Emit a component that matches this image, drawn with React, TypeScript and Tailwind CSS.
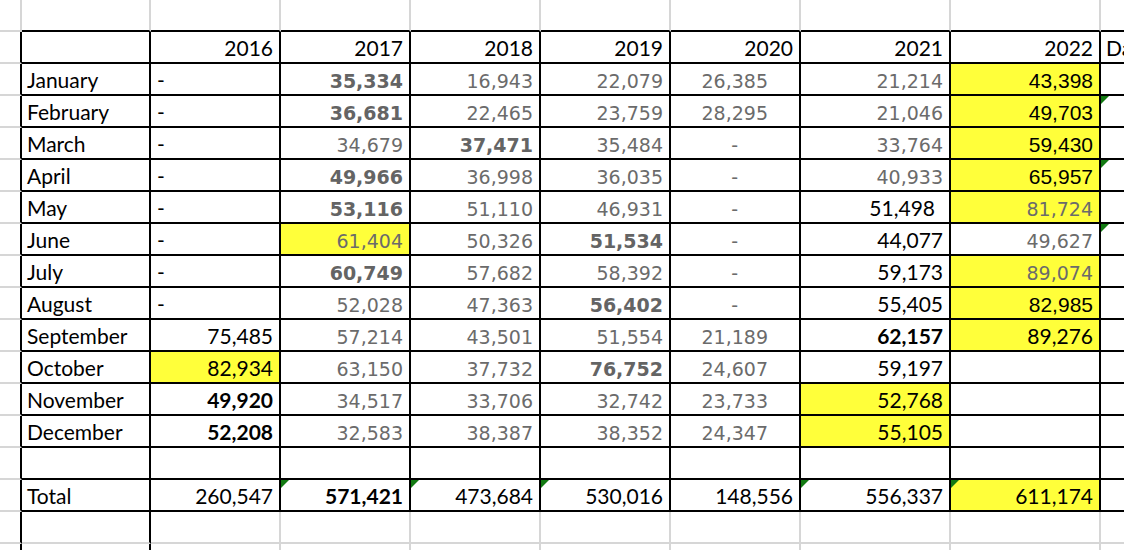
import type { ReactNode } from "react";

type Kind = "g" | "gb" | "k" | "kb" | "a" | "dash" | "gdash";
type Cell = { v?: string; k?: Kind; y?: boolean; t?: boolean; pr?: string };

// font per cell style
const kindCls: Record<Kind, string> = {
  g: "justify-end font-['DejaVu_Sans',sans-serif] text-[19px] text-[#6b6b6b] pb-[3px]",
  gb: "justify-end font-['DejaVu_Sans',sans-serif] font-bold text-[19px] text-[#646464] pb-[3px]",
  k: "justify-end font-['Lato',sans-serif] text-[21px] text-black pb-[4px]",
  kb: "justify-end font-['Lato',sans-serif] font-bold text-[21px] text-black pb-[4px]",
  a: "justify-end font-['Liberation_Sans',Arial,sans-serif] text-[21px] text-black pb-[3px]",
  dash: "justify-start pl-[6px] font-['Lato',sans-serif] text-[21px] text-black pb-[4px]",
  gdash: "justify-end pr-[61px] font-['DejaVu_Sans',sans-serif] text-[19px] text-[#6b6b6b] pb-[3px]",
};

const g = (v: string, o: Partial<Cell> = {}): Cell => ({ v, k: "g", ...o });
const gb = (v: string, o: Partial<Cell> = {}): Cell => ({ v, k: "gb", ...o });
const k = (v: string, o: Partial<Cell> = {}): Cell => ({ v, k: "k", ...o });
const kb = (v: string, o: Partial<Cell> = {}): Cell => ({ v, k: "kb", ...o });
const a = (v: string, o: Partial<Cell> = {}): Cell => ({ v, k: "a", ...o });
const D: Cell = { v: "-", k: "dash" };
const GD: Cell = { v: "-", k: "gdash" };
const gp = (v: string) => g(v, { pr: "pr-[31px]" });
const Y = { y: true };
const T = { t: true };

// label, 2016..2022, triangle in the "Da" column
const body: [string, Cell[], boolean][] = [
  ["January", [D, gb("35,334"), g("16,943"), g("22,079"), gp("26,385"), g("21,214"), a("43,398", Y)], false],
  ["February", [D, gb("36,681"), g("22,465"), g("23,759"), gp("28,295"), g("21,046"), a("49,703", Y)], true],
  ["March", [D, g("34,679"), gb("37,471"), g("35,484"), GD, g("33,764"), a("59,430", Y)], false],
  ["April", [D, gb("49,966"), g("36,998"), g("36,035"), GD, g("40,933"), a("65,957", Y)], true],
  ["May", [D, gb("53,116"), g("51,110"), g("46,931"), GD, k("51,498", { pr: "pr-[14px]" }), g("81,724", Y)], false],
  ["June", [D, g("61,404", Y), g("50,326"), gb("51,534"), GD, k("44,077"), g("49,627")], true],
  ["July", [D, gb("60,749"), g("57,682"), g("58,392"), GD, k("59,173"), g("89,074", Y)], false],
  ["August", [D, g("52,028"), g("47,363"), gb("56,402"), GD, k("55,405"), a("82,985", Y)], false],
  ["September", [k("75,485"), g("57,214"), g("43,501"), g("51,554"), gp("21,189"), kb("62,157"), k("89,276", Y)], false],
  ["October", [k("82,934", Y), g("63,150"), g("37,732"), gb("76,752"), gp("24,607"), k("59,197"), {}], false],
  ["November", [kb("49,920"), g("34,517"), g("33,706"), g("32,742"), gp("23,733"), k("52,768", Y), {}], false],
  ["December", [kb("52,208"), g("32,583"), g("38,387"), g("38,352"), gp("24,347"), k("55,105", Y), {}], false],
];

const years = ["2016", "2017", "2018", "2019", "2020", "2021", "2022"];

function Tri() {
  return (
    <svg className="absolute left-0 top-0" width="8" height="8" viewBox="0 0 8 8">
      <polygon points="0,0 8,0 0,8" fill="#127a12" />
    </svg>
  );
}

function Box({
  r,
  c,
  cell,
  children,
  extra = "",
}: {
  r: number;
  c: number;
  cell?: Cell;
  children?: ReactNode;
  extra?: string;
}) {
  // which grid lines are the table's black ones
  let right = "border-r-[#d6d6d6]";
  if ((c === 0 || c === 1) && r >= 1) right = "border-r-black";
  if (c >= 2 && c <= 8 && r >= 1 && r <= 15) right = "border-r-black";
  const bottom = c >= 1 && r <= 15 ? "border-b-black" : "border-b-[#d6d6d6]";
  const kind = cell?.k ? kindCls[cell.k] : "";
  const pad = cell?.k && cell.k !== "dash" && cell.k !== "gdash" ? cell.pr || "pr-[6px]" : "";
  return (
    <div
      className={`relative flex items-end overflow-hidden whitespace-nowrap leading-none border-r-2 border-b-2 ${right} ${bottom} ${
        cell?.y ? "bg-[#ffff3a]" : ""
      } ${kind} ${pad} ${extra}`}
    >
      {cell?.t && <Tri />}
      {cell?.v}
      {children}
    </div>
  );
}

const label = "justify-start pl-[5px] font-['Lato',sans-serif] text-[21px] text-black pb-[4px]";

export default function App() {
  const rows: ReactNode[] = [];

  // row 0: plain sheet grid above the table
  for (let c = 0; c < 10; c++) rows.push(<Box key={`0-${c}`} r={0} c={c} />);

  // header
  rows.push(<Box key="1-0" r={1} c={0} />);
  rows.push(<Box key="1-1" r={1} c={1} />);
  years.forEach((y, i) => rows.push(<Box key={`1-${i + 2}`} r={1} c={i + 2} cell={k(y)} />));
  rows.push(<Box key="1-9" r={1} c={9} extra={label}>Da</Box>);

  body.forEach(([name, cells, tri], idx) => {
    const r = idx + 2;
    rows.push(<Box key={`${r}-0`} r={r} c={0} />);
    rows.push(<Box key={`${r}-1`} r={r} c={1} extra={label}>{name}</Box>);
    cells.forEach((cell, i) => rows.push(<Box key={`${r}-${i + 2}`} r={r} c={i + 2} cell={cell} />));
    rows.push(<Box key={`${r}-9`} r={r} c={9} cell={tri ? { t: true } : undefined} />);
  });

  // blank row
  for (let c = 0; c < 10; c++) rows.push(<Box key={`14-${c}`} r={14} c={c} />);

  // total
  const totals: Cell[] = [
    k("260,547"),
    kb("571,421", T),
    k("473,684", T),
    k("530,016", T),
    k("148,556"),
    k("556,337", T),
    k("611,174", { y: true, t: true }),
  ];
  rows.push(<Box key="15-0" r={15} c={0} />);
  rows.push(<Box key="15-1" r={15} c={1} extra={label}>Total</Box>);
  totals.forEach((cell, i) => rows.push(<Box key={`15-${i + 2}`} r={15} c={i + 2} cell={cell} />));
  rows.push(<Box key="15-9" r={15} c={9} />);

  // below the table
  for (let r = 16; r < 18; r++)
    for (let c = 0; c < 10; c++) rows.push(<Box key={`${r}-${c}`} r={r} c={c} />);

  return (
    <div className="h-[550px] w-[1124px] overflow-hidden bg-white">
      <div className="grid w-[1251px] grid-cols-[22px_129px_130px_130px_130px_130px_130px_150px_150px_150px] auto-rows-[32px]">
        {rows}
      </div>
    </div>
  );
}
